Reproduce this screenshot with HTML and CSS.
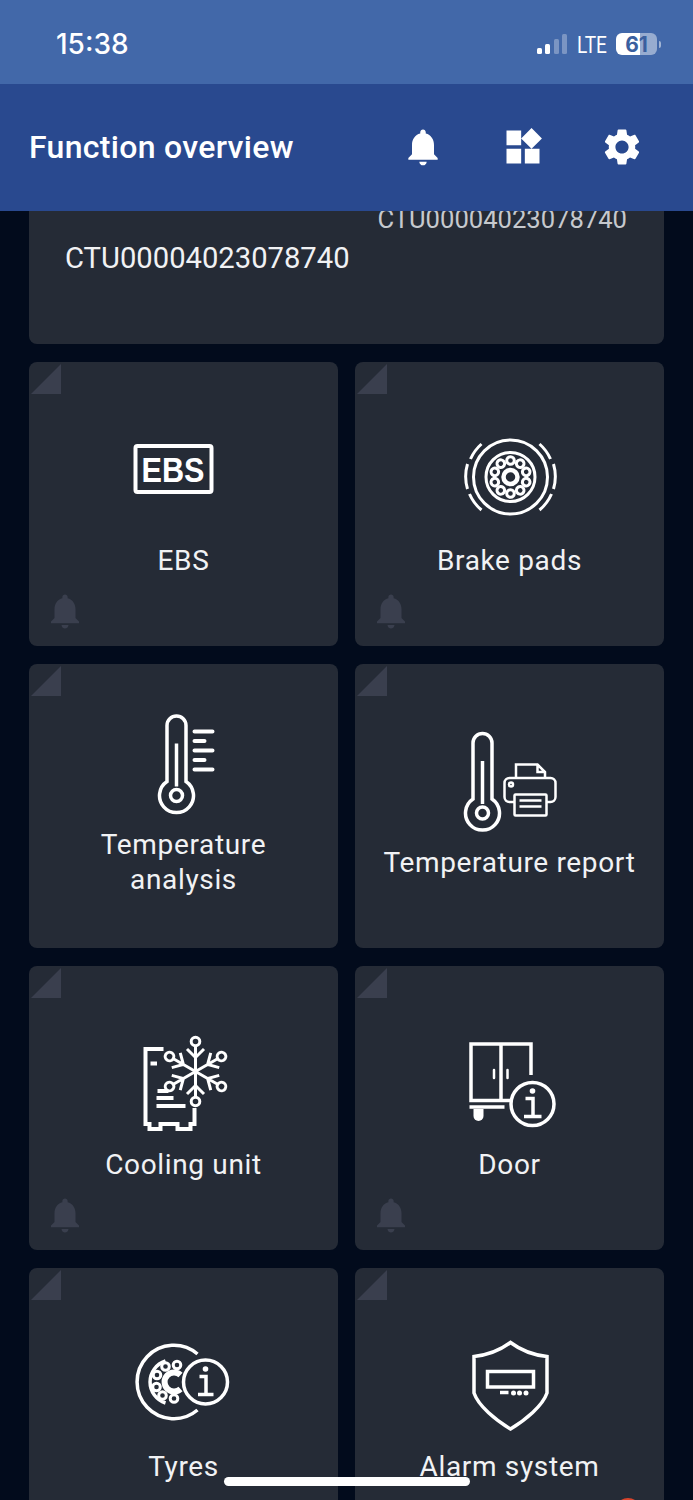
FILE: index.html
```html
<!DOCTYPE html>
<html lang="en">
<head>
<meta charset="utf-8">
<title>Function overview</title>
<link rel="stylesheet" href="styles.css">
</head>
<body>
<div class="app">
  <div class="status-bar">
    <span class="clock">15:38</span>
    <div class="status-right">
      <div class="signal"><i class="b1"></i><i class="b2"></i><i class="b3"></i><i class="b4"></i></div>
      <span class="lte">LTE</span>
      <div class="battery"><span>61</span></div>
      <i class="nub"></i>
    </div>
  </div>
  <header class="app-bar">
    <h1 class="title">Function overview</h1>
    <div class="actions">
      <svg class="action action-bell" viewBox="0 0 24 24"><path d="M12 22c1.1 0 2-.9 2-2h-4c0 1.1.89 2 2 2zm6-6v-5c0-3.07-1.64-5.64-4.5-6.32V4c0-.83-.67-1.5-1.5-1.5s-1.5.67-1.5 1.5v.68C7.63 5.36 6 7.92 6 11v5l-2 2v1h16v-1l-2-2z"/></svg>
      <svg class="action" viewBox="0 0 24 24"><path d="M13 13v8h8v-8h-8zM3 21h8v-8H3v8zM3 3v8h8V3H3zm13.66-1.31L11 7.34 16.66 13l5.66-5.66-5.66-5.65z"/></svg>
      <svg class="action" viewBox="0 0 24 24"><path d="M19.14 12.94c.04-.3.06-.61.06-.94 0-.32-.02-.64-.07-.94l2.03-1.58c.18-.14.23-.41.12-.61l-1.92-3.32c-.12-.22-.37-.29-.59-.22l-2.39.96c-.5-.38-1.03-.7-1.62-.94l-.36-2.54c-.04-.24-.24-.41-.48-.41h-3.84c-.24 0-.43.17-.47.41l-.36 2.54c-.59.24-1.13.57-1.62.94l-2.39-.96c-.22-.08-.47 0-.59.22L2.74 8.87c-.12.21-.08.47.12.61l2.03 1.58c-.05.3-.09.63-.09.94s.02.64.07.94l-2.03 1.58c-.18.14-.23.41-.12.61l1.92 3.32c.12.22.37.29.59.22l2.39-.96c.5.38 1.03.7 1.62.94l.36 2.54c.05.24.24.41.48.41h3.84c.24 0 .44-.17.47-.41l.36-2.54c.59-.24 1.13-.56 1.62-.94l2.39.96c.22.08.47 0 .59-.22l1.92-3.32c.12-.22.07-.47-.12-.61l-2.01-1.58zM12 15.6c-1.98 0-3.6-1.62-3.6-3.6s1.62-3.6 3.6-3.6 3.6 1.62 3.6 3.6-1.62 3.6-3.6 3.6z"/></svg>
    </div>
  </header>
  <main class="content">
    <section class="info-card">
      <div class="id-secondary">CTU00004023078740</div>
      <div class="id-primary">CTU00004023078740</div>
    </section>
    <section class="grid">

      <article class="tile">
        <i class="corner"></i>
        <svg class="icon" viewBox="123.5 429 120 100">
          <rect x="135" y="446" width="76" height="46" rx="2" class="ln4"/>
          <text x="141" y="482" class="ebs" textLength="63" lengthAdjust="spacingAndGlyphs">EBS</text>
        </svg>
        <div class="label">EBS</div>
        <svg class="tile-bell" viewBox="0 0 24 24"><path d="M12 22c1.1 0 2-.9 2-2h-4c0 1.1.89 2 2 2zm6-6v-5c0-3.07-1.64-5.64-4.5-6.32V4c0-.83-.67-1.5-1.5-1.5s-1.5.67-1.5 1.5v.68C7.63 5.36 6 7.92 6 11v5l-2 2v1h16v-1l-2-2z"/></svg>
      </article>

      <article class="tile">
        <i class="corner"></i>
        <svg class="icon" viewBox="449.5 429 120 100">
          <g transform="translate(464 431)" class="ln3">
            <circle cx="46" cy="46" r="37"/>
            <circle cx="46" cy="46" r="24.500"/>
            <circle cx="46" cy="46" r="7" stroke-width="4.500"/>
            <path d="M6 28A44 44 0 0 1 17 13M3 33A44 44 0 0 0 3 58M5 63A44 44 0 0 0 17 79M75 13A44 44 0 0 1 86 28M89 33A44 44 0 0 1 89 58M87 63A44 44 0 0 1 75 79"/>
            <g stroke-width="3">
              <circle cx="46" cy="29.500" r="3.800"/>
              <circle cx="46" cy="29.500" r="3.800" transform="rotate(36 46 46)"/>
              <circle cx="46" cy="29.500" r="3.800" transform="rotate(72 46 46)"/>
              <circle cx="46" cy="29.500" r="3.800" transform="rotate(108 46 46)"/>
              <circle cx="46" cy="29.500" r="3.800" transform="rotate(144 46 46)"/>
              <circle cx="46" cy="29.500" r="3.800" transform="rotate(180 46 46)"/>
              <circle cx="46" cy="29.500" r="3.800" transform="rotate(216 46 46)"/>
              <circle cx="46" cy="29.500" r="3.800" transform="rotate(252 46 46)"/>
              <circle cx="46" cy="29.500" r="3.800" transform="rotate(288 46 46)"/>
              <circle cx="46" cy="29.500" r="3.800" transform="rotate(324 46 46)"/>
            </g>
          </g>
        </svg>
        <div class="label">Brake pads</div>
        <svg class="tile-bell" viewBox="0 0 24 24"><path d="M12 22c1.1 0 2-.9 2-2h-4c0 1.1.89 2 2 2zm6-6v-5c0-3.07-1.64-5.64-4.5-6.32V4c0-.83-.67-1.5-1.5-1.5s-1.5.67-1.5 1.5v.68C7.63 5.36 6 7.92 6 11v5l-2 2v1h16v-1l-2-2z"/></svg>
      </article>

      <article class="tile">
        <i class="corner"></i>
        <svg class="icon" viewBox="123.5 713.5 120 100">
          <g class="ln35">
            <path d="M166.500 781V725a9.500 9.500 0 0 1 19 0V781A17 17 0 1 1 166.500 781Z"/>
            <path d="M176 743V786" />
            <circle cx="176" cy="795" r="6"/>
            <path class="rnd" stroke-width="4" d="M194 731H212M194 740.500H204M194 750H212M194 759.500H204M194 769H212"/>
          </g>
        </svg>
        <div class="label">Temperature analysis</div>
      </article>

      <article class="tile">
        <i class="corner"></i>
        <svg class="icon" viewBox="449.5 731 120 100">
          <g class="ln35">
            <path d="M472.500 799V743a9.500 9.500 0 0 1 19 0V799A17 17 0 1 1 472.500 799Z"/>
            <path d="M482 761V804"/>
            <circle cx="482" cy="813" r="6"/>
          </g>
          <g class="ln25">
            <path d="M515.500 777V764.500H537L544.500 772V777M537 764.500V772H544.500"/>
            <path d="M514 802H509A5 5 0 0 1 504 797V783A5 5 0 0 1 509 778H550A5 5 0 0 1 555 783V797A5 5 0 0 1 550 802H546"/>
            <rect x="514" y="794.500" width="32" height="21" rx="1"/>
            <path d="M519 800.500H541M519 806.500H541"/>
            <circle cx="510.500" cy="784.500" r="2"/>
          </g>
        </svg>
        <div class="label">Temperature report</div>
      </article>

      <article class="tile">
        <i class="corner"></i>
        <svg class="icon" viewBox="123.5 1033 120 100">
          <g class="ln4">
            <path d="M163 1049H145V1124H149V1129H160V1124H177V1129H190V1124H194V1108"/>
            <path d="M150 1063.500H156.500M157 1091H168M156 1098H173M156 1106H185"/>
          </g>
          <g class="ln3" transform="translate(195 1071.5)">
            <g><path d="M0 0V-25.500M-8.500 -22.500L0 -14L8.500 -22.500"/><circle cy="-30" r="4.300"/></g>
            <g transform="rotate(60)"><path d="M0 0V-25.500M-8.500 -22.500L0 -14L8.500 -22.500"/><circle cy="-30" r="4.300"/></g>
            <g transform="rotate(120)"><path d="M0 0V-25.500M-8.500 -22.500L0 -14L8.500 -22.500"/><circle cy="-30" r="4.300"/></g>
            <g transform="rotate(180)"><path d="M0 0V-25.500M-8.500 -22.500L0 -14L8.500 -22.500"/><circle cy="-30" r="4.300"/></g>
            <g transform="rotate(240)"><path d="M0 0V-25.500M-8.500 -22.500L0 -14L8.500 -22.500"/><circle cy="-30" r="4.300"/></g>
            <g transform="rotate(300)"><path d="M0 0V-25.500M-8.500 -22.500L0 -14L8.500 -22.500"/><circle cy="-30" r="4.300"/></g>
          </g>
        </svg>
        <div class="label">Cooling unit</div>
        <svg class="tile-bell" viewBox="0 0 24 24"><path d="M12 22c1.1 0 2-.9 2-2h-4c0 1.1.89 2 2 2zm6-6v-5c0-3.07-1.64-5.64-4.5-6.32V4c0-.83-.67-1.5-1.5-1.5s-1.5.67-1.5 1.5v.68C7.63 5.36 6 7.92 6 11v5l-2 2v1h16v-1l-2-2z"/></svg>
      </article>

      <article class="tile">
        <i class="corner"></i>
        <svg class="icon" viewBox="449.5 1033 120 100">
          <g class="ln35">
            <path d="M510 1100.500H470.500V1044H530.500V1075"/>
            <path d="M500.500 1044V1100"/>
            <path d="M469 1107H504"/>
            <circle cx="532" cy="1104" r="21.500"/>
            <path d="M525 1098.500H532.500V1116M523.500 1116.500H541"/>
          </g>
          <path class="solid" d="M473 1109H483V1116A5 5 0 0 1 473 1116Z"/>
          <circle class="solid" cx="532" cy="1091" r="2.800"/>
          <path class="ln25 rnd" d="M493.500 1070V1078M507 1070V1078"/>
        </svg>
        <div class="label">Door</div>
        <svg class="tile-bell" viewBox="0 0 24 24"><path d="M12 22c1.1 0 2-.9 2-2h-4c0 1.1.89 2 2 2zm6-6v-5c0-3.07-1.64-5.64-4.5-6.32V4c0-.83-.67-1.5-1.5-1.5s-1.5.67-1.5 1.5v.68C7.63 5.36 6 7.92 6 11v5l-2 2v1h16v-1l-2-2z"/></svg>
      </article>

      <article class="tile">
        <i class="corner"></i>
        <svg class="icon" viewBox="123.5 1335 120 100">
          <g class="ln35">
            <path d="M197 1354A36.700 36.700 0 1 0 197 1410"/>
            <path d="M165 1361A22 22 0 0 0 165 1403"/>
            <path stroke-width="6" d="M180 1375A9.500 9.500 0 1 0 180 1389"/>
            <circle cx="205" cy="1382" r="22"/>
            <path d="M199 1376.500H205.500V1394M197.500 1394.500H213"/>
          </g>
          <circle class="solid" cx="205" cy="1369" r="2.800"/>
          <g class="ln3">
            <circle cx="176.500" cy="1365" r="3.800"/>
            <circle cx="165" cy="1366.500" r="3.800"/>
            <circle cx="156.500" cy="1375" r="3.800"/>
            <circle cx="156" cy="1387" r="3.800"/>
            <circle cx="162" cy="1395.500" r="3.800"/>
            <circle cx="173.500" cy="1398.500" r="3.800"/>
          </g>
        </svg>
        <div class="label">Tyres</div>
      </article>

      <article class="tile">
        <i class="corner"></i>
        <svg class="icon" viewBox="449.5 1335 120 100">
          <g class="ln35">
            <path d="M510 1342.500C500 1350 488 1355 473.500 1356.500V1393C478 1406 495 1420 510 1429C525 1420 542 1406 546.500 1393V1356.500C532 1355 520 1350 510 1342.500Z"/>
            <rect x="487" y="1371.500" width="46" height="15.500"/>
            <path d="M499.500 1392.500H508"/>
          </g>
          <circle class="solid" cx="513" cy="1393" r="2.500"/>
          <circle class="solid" cx="519" cy="1393" r="2.500"/>
          <circle class="solid" cx="525.500" cy="1393" r="2.500"/>
        </svg>
        <div class="label">Alarm system</div>
        <i class="alert-dot"></i>
      </article>

    </section>
  </main>
  <div class="home-indicator"></div>
</div>
</body>
</html>
```
FILE: styles.css
```css
* { box-sizing: border-box; }
html, body { margin: 0; padding: 0; background: #020b1c; }
.app {
  position: relative;
  width: 693px;
  height: 1500px;
  overflow: hidden;
  display: flex;
  flex-direction: column;
  font-family: Roboto, "Liberation Sans", sans-serif;
  color: #f1f2f4;
}
.status-bar {
  flex: 0 0 84px;
  background: #4268a9;
  display: flex;
  align-items: center;
  justify-content: space-between;
  padding: 8px 32px 4px 56px;
  color: #fff;
}
.clock { font-family: Inter, sans-serif; font-weight: 500; font-size: 28px; }
.status-right { display: flex; align-items: center; }
.signal { display: flex; align-items: flex-end; gap: 3.500px; height: 20px; margin-right: 10px; }
.signal i { display: block; width: 5px; border-radius: 1.500px; background: #fff; }
.signal .b1 { height: 6px; }
.signal .b2 { height: 10px; }
.signal .b3 { height: 15px; background: rgba(255,255,255,.3); }
.signal .b4 { height: 20px; background: rgba(255,255,255,.3); }
.lte {
  display: inline-block;
  font-size: 23px;
  width: 39px;
  margin-top: 2px;
  transform: scaleX(.83);
  transform-origin: left center;
}
.battery {
  width: 41px;
  height: 22px;
  border-radius: 6px;
  background: linear-gradient(90deg, #fff 0 59%, rgba(255,255,255,.45) 59% 100%);
  display: flex;
  align-items: center;
  justify-content: center;
  color: #3a5f9f;
  font-size: 21px;
  font-weight: 700;
  font-family: Inter, sans-serif;
}
.nub { display: block; width: 2px; height: 7px; margin-left: 2px; border-radius: 0 2px 2px 0; background: rgba(255,255,255,.5); }
.app-bar {
  flex: 0 0 127px;
  background: #29498f;
  display: flex;
  align-items: center;
  justify-content: space-between;
  padding: 0 49px 0 29px;
  position: relative;
  z-index: 1;
}
.title { margin: 0 0 2px; font-size: 32px; font-weight: 500; color: #fff; letter-spacing: .3px; }
.actions { display: flex; gap: 55px; margin-top: -2px; }
.action { display: block; width: 44px; height: 44px; fill: #fff; }
.action-bell { margin: 0 1px 0 -1px; }
.content { flex: 1 1 auto; padding: 0 29px; overflow: hidden; }
.info-card {
  display: flow-root;
  height: 133px;
  background: #252b36;
  border-radius: 0 0 8px 8px;
  padding: 0 37px 0 36px;
}
.id-secondary {
  margin-top: -7px;
  height: 30px;
  line-height: 30px;
  text-align: right;
  font-size: 25.600px;
  color: #c6c9ce;
}
.id-primary { margin-top: 6px; line-height: 36px; font-size: 29.200px; color: #f1f2f4; }
.grid {
  margin-top: 18px;
  display: grid;
  grid-template-columns: 309px 309px;
  grid-auto-rows: 284px;
  column-gap: 17px;
  row-gap: 18px;
}
.tile {
  position: relative;
  background: #252b36;
  border-radius: 8px;
  display: flex;
  flex-direction: column;
  align-items: center;
  justify-content: center;
  padding: 0 0 1px;
}
.corner {
  position: absolute;
  left: 2px;
  top: 2px;
  width: 30px;
  height: 30px;
  background: #3a3f4e;
  clip-path: polygon(100% 0, 100% 100%, 0 100%);
}
.icon { display: block; flex: none; width: 120px; height: 100px; overflow: visible; }
.label {
  margin-top: 13.500px;
  width: 270px;
  text-align: center;
  font-size: 28px;
  line-height: 35px;
  letter-spacing: .65px;
}
.tile-bell { position: absolute; left: 15px; top: 228px; width: 42px; height: 42px; fill: #3a3f4e; }
.alert-dot { position: absolute; left: 260px; top: 230px; width: 26px; height: 26px; border-radius: 50%; background: #d9442b; }
.home-indicator {
  position: absolute;
  left: 224px;
  top: 1477px;
  width: 246px;
  height: 9px;
  border-radius: 5px;
  background: #fff;
  z-index: 2;
}
.ln4, .ln3, .ln25, .ln35 { fill: none; stroke: #fff; }
.ln4 { stroke-width: 4; }
.ln3 { stroke-width: 3; }
.ln25 { stroke-width: 2.500; }
.ln35 { stroke-width: 3.500; }
.rnd { stroke-linecap: round; }
.solid { fill: #fff; stroke: none; }
.ebs { font-family: "Liberation Sans", Arial, sans-serif; font-weight: 700; font-size: 35px; fill: #fff; }
```
